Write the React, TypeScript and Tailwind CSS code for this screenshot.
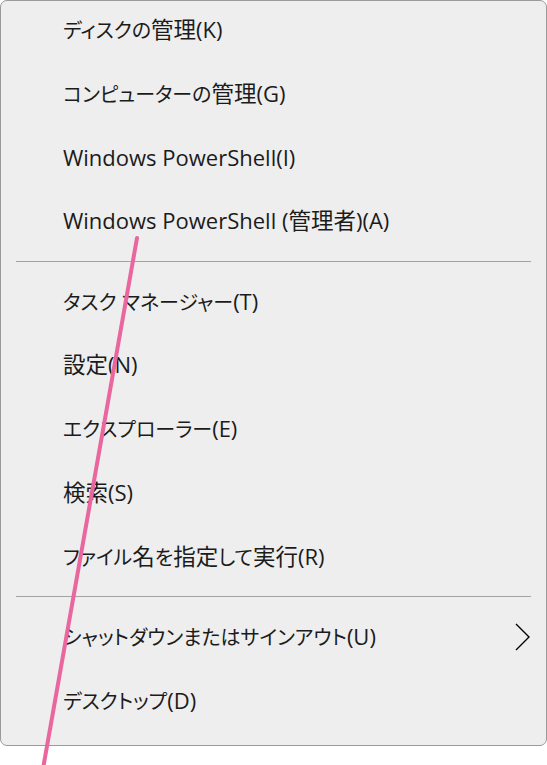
import React from 'react';

type Item = { label: string; submenu?: boolean };

const groups: Item[][] = [
  [
    { label: 'ディスクの管理(K)' },
    { label: 'コンピューターの管理(G)' },
    { label: 'Windows PowerShell(I)' },
    { label: 'Windows PowerShell (管理者)(A)' },
  ],
  [
    { label: 'タスク マネージャー(T)' },
    { label: '設定(N)' },
    { label: 'エクスプローラー(E)' },
    { label: '検索(S)' },
    { label: 'ファイル名を指定して実行(R)' },
  ],
  [{ label: 'シャットダウンまたはサインアウト(U)', submenu: true }, { label: 'デスクトップ(D)' }],
];

// Segoe UI / Yu Gothic UI mix: latin a bit larger, kana proportional and narrower
function kind(ch: string) {
  if (/[\x00-\x7F]/.test(ch)) return 'latin';
  if (/[\u4E00-\u9FFF]/.test(ch)) return 'kanji';
  return 'kana';
}

const runClass: Record<string, string> = {
  latin: 'text-[22px]',
  kanji: 'text-[22.5px]',
  kana: 'text-[20px]',
};

function Label({ text }: { text: string }) {
  const runs: { k: string; s: string }[] = [];
  for (const ch of text) {
    const k = kind(ch);
    const last = runs[runs.length - 1];
    if (last && last.k === k) last.s += ch;
    else runs.push({ k, s: ch });
  }
  return (
    <span className="leading-none whitespace-pre text-[#1b1b1b] [font-feature-settings:'palt']">
      {runs.map((r, i) => (
        <span key={i} className={runClass[r.k]}>
          {r.s}
        </span>
      ))}
    </span>
  );
}

function MenuRow({ item, first }: { item: Item; first?: boolean }) {
  return (
    <div className={`flex h-16 items-center justify-between pb-[3px] pl-[62px] pr-[16px] ${first ? '-mt-[2px]' : ''}`}>
      <Label text={item.label} />
      {item.submenu && (
        <svg width="16" height="28" viewBox="0 0 16 28" className="text-black">
          <polyline points="2,1 15,14 2,27" fill="none" stroke="currentColor" strokeWidth="1.4" />
        </svg>
      )}
    </div>
  );
}

export default function App() {
  return (
    <div
      className="relative h-[765px] w-[547px] overflow-hidden bg-white"
      style={{ fontFamily: '"Open Sans", "Noto Sans CJK JP", sans-serif' }}
    >
      <div className="flex h-[746px] w-[547px] flex-col rounded-[7px] border border-[#9a9a9a] bg-[#eeeeee] pb-[11px]">
        {groups.map((group, gi) => (
          <React.Fragment key={gi}>
            {gi > 0 && <div className="mx-[15px] mb-[9px] mt-[6px] h-px bg-[#a3a3a3]" />}
            {group.map((item, i) => (
              <MenuRow key={item.label} item={item} first={gi === 0 && i === 0} />
            ))}
          </React.Fragment>
        ))}
      </div>
      <svg className="pointer-events-none absolute left-0 top-0" width="547" height="765">
        <line x1="137" y1="238" x2="41" y2="780" stroke="#e9669f" strokeWidth="4" strokeLinecap="round" />
      </svg>
    </div>
  );
}
